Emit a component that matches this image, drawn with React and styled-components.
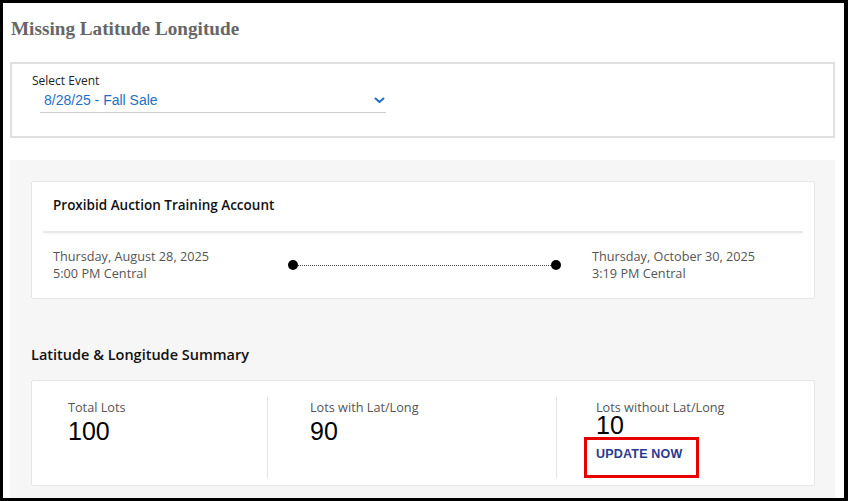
import styled, { createGlobalStyle } from "styled-components";

const GlobalStyle = createGlobalStyle`
  html, body {
    margin: 0;
    padding: 0;
    background: #ffffff;
  }
  * {
    box-sizing: border-box;
  }
`;

const Frame = styled.div`
  display: flex;
  flex-direction: column;
  width: 848px;
  height: 501px;
  overflow: hidden;
  border-style: solid;
  border-color: #000000;
  border-width: 3px 4px 3px 3px;
  padding: 0 9px 0 7px;
  background: #ffffff;
`;

const PageTitle = styled.h1`
  margin: 15px 0 22px 1px;
  font-family: "Liberation Serif", "Times New Roman", serif;
  font-size: 19.2px;
  line-height: 22px;
  font-weight: bold;
  color: #666666;
`;

const FilterBox = styled.div`
  height: 76px;
  padding: 9px 20px 0 20px;
  border: 2px solid #e0e0e0;
`;

const FieldLabel = styled.div`
  font-family: "Open Sans", sans-serif;
  font-size: 12px;
  line-height: 16px;
  color: #222222;
`;

const SelectField = styled.div`
  display: flex;
  align-items: center;
  justify-content: space-between;
  width: 346px;
  margin: 3px 0 0 8px;
  padding: 0 1px 3px 4px;
  border-bottom: 1px solid #cccccc;
  font-family: "Liberation Sans", Arial, sans-serif;
  font-size: 14px;
  line-height: 17px;
  color: #1f6fc5;
`;

const Panel = styled.div`
  flex: 1;
  margin-top: 22px;
  padding: 21px 20px 0 21px;
  background: #f6f6f6;
`;

const Card = styled.div`
  background: #ffffff;
  border: 1px solid #e6e6e6;
  border-radius: 2px;
`;

const EventCard = styled(Card)`
  height: 118px;
  padding: 0 11px;
`;

const EventHeader = styled.div`
  height: 51px;
  padding: 14px 0 0 10px;
  border-bottom: 2px solid #e9e9e9;
  box-shadow: 0 3px 3px -2px rgba(0, 0, 0, 0.06);
  font-family: "Open Sans", sans-serif;
  font-size: 13.5px;
  font-weight: 600;
  line-height: 18px;
  color: #111111;
`;

const EventBody = styled.div`
  display: flex;
  align-items: center;
  padding: 15px 0 0 10px;
`;

const DateBlock = styled.div`
  width: ${(p) => p.$width || "auto"};
  font-family: "Open Sans", sans-serif;
  font-size: 12.7px;
  line-height: 17px;
  color: #555555;
`;

const Timeline = styled.div`
  display: flex;
  align-items: center;
  width: 273px;
  height: 10px;
  margin-right: 31px;
`;

const TimelineDot = styled.span`
  flex: none;
  width: 10px;
  height: 10px;
  border-radius: 50%;
  background: #000000;
`;

const TimelineLine = styled.span`
  flex: 1;
  height: 0;
  border-top: 1px dotted #444444;
`;

const SectionTitle = styled.h2`
  margin: 46px 0 15px 0;
  font-family: "Open Sans", sans-serif;
  font-size: 14.5px;
  font-weight: 600;
  line-height: 20px;
  color: #111111;
`;

const SummaryCard = styled(Card)`
  display: grid;
  grid-template-columns: 235px 289px 1fr;
  height: 106px;
  padding: 16px 0;
`;

const Stat = styled.div`
  padding: 2px 0 0 ${(p) => p.$pad}px;
  border-left: ${(p) => (p.$divider ? "1px solid #e2e2e2" : "none")};
`;

const StatLabel = styled.div`
  font-family: "Open Sans", sans-serif;
  font-size: 12.7px;
  line-height: 17px;
  color: #555555;
`;

const StatValue = styled.div`
  margin-top: ${(p) => (p.$compact ? "-2px" : "3px")};
  font-family: "Liberation Sans", Arial, sans-serif;
  font-size: 25px;
  line-height: ${(p) => (p.$compact ? "22px" : "25px")};
  color: #000000;
`;

const UpdateButton = styled.button`
  display: block;
  width: 115px;
  margin: 1px 0 0 -12px;
  padding: 7px 0 13px 9px;
  border: 3px solid #e60000;
  background: transparent;
  text-align: left;
  font-family: "Liberation Sans", Arial, sans-serif;
  font-size: 12.5px;
  font-weight: bold;
  letter-spacing: 0.2px;
  line-height: 15px;
  color: #2b3990;
  cursor: pointer;
`;

const Chevron = () => (
  <svg width="11" height="7" viewBox="0 0 11 7">
    <polyline
      points="1.5,1.5 5.5,5 9.5,1.5"
      fill="none"
      stroke="#1f6fc5"
      strokeWidth="2"
      strokeLinecap="round"
      strokeLinejoin="round"
    />
  </svg>
);

function App() {
  const stats = [
    { label: "Total Lots", value: 100, pad: 36 },
    { label: "Lots with Lat/Long", value: 90, pad: 42 },
    { label: "Lots without Lat/Long", value: 10, pad: 39, action: true },
  ];

  return (
    <>
      <GlobalStyle />
      <Frame>
        <PageTitle>Missing Latitude Longitude</PageTitle>
        <FilterBox>
          <FieldLabel>Select Event</FieldLabel>
          <SelectField>
            <span>8/28/25 - Fall Sale</span>
            <Chevron />
          </SelectField>
        </FilterBox>
        <Panel>
          <EventCard>
            <EventHeader>Proxibid Auction Training Account</EventHeader>
            <EventBody>
              <DateBlock $width="235px">
                Thursday, August 28, 2025
                <br />
                5:00 PM Central
              </DateBlock>
              <Timeline>
                <TimelineDot />
                <TimelineLine />
                <TimelineDot />
              </Timeline>
              <DateBlock>
                Thursday, October 30, 2025
                <br />
                3:19 PM Central
              </DateBlock>
            </EventBody>
          </EventCard>
          <SectionTitle>Latitude &amp; Longitude Summary</SectionTitle>
          <SummaryCard>
            {stats.map((s, idx) => (
              <Stat key={s.label} $pad={s.pad} $divider={idx > 0}>
                <StatLabel>{s.label}</StatLabel>
                <StatValue $compact={s.action}>{s.value}</StatValue>
                {s.action && <UpdateButton>UPDATE NOW</UpdateButton>}
              </Stat>
            ))}
          </SummaryCard>
        </Panel>
      </Frame>
    </>
  );
}

export default App;
